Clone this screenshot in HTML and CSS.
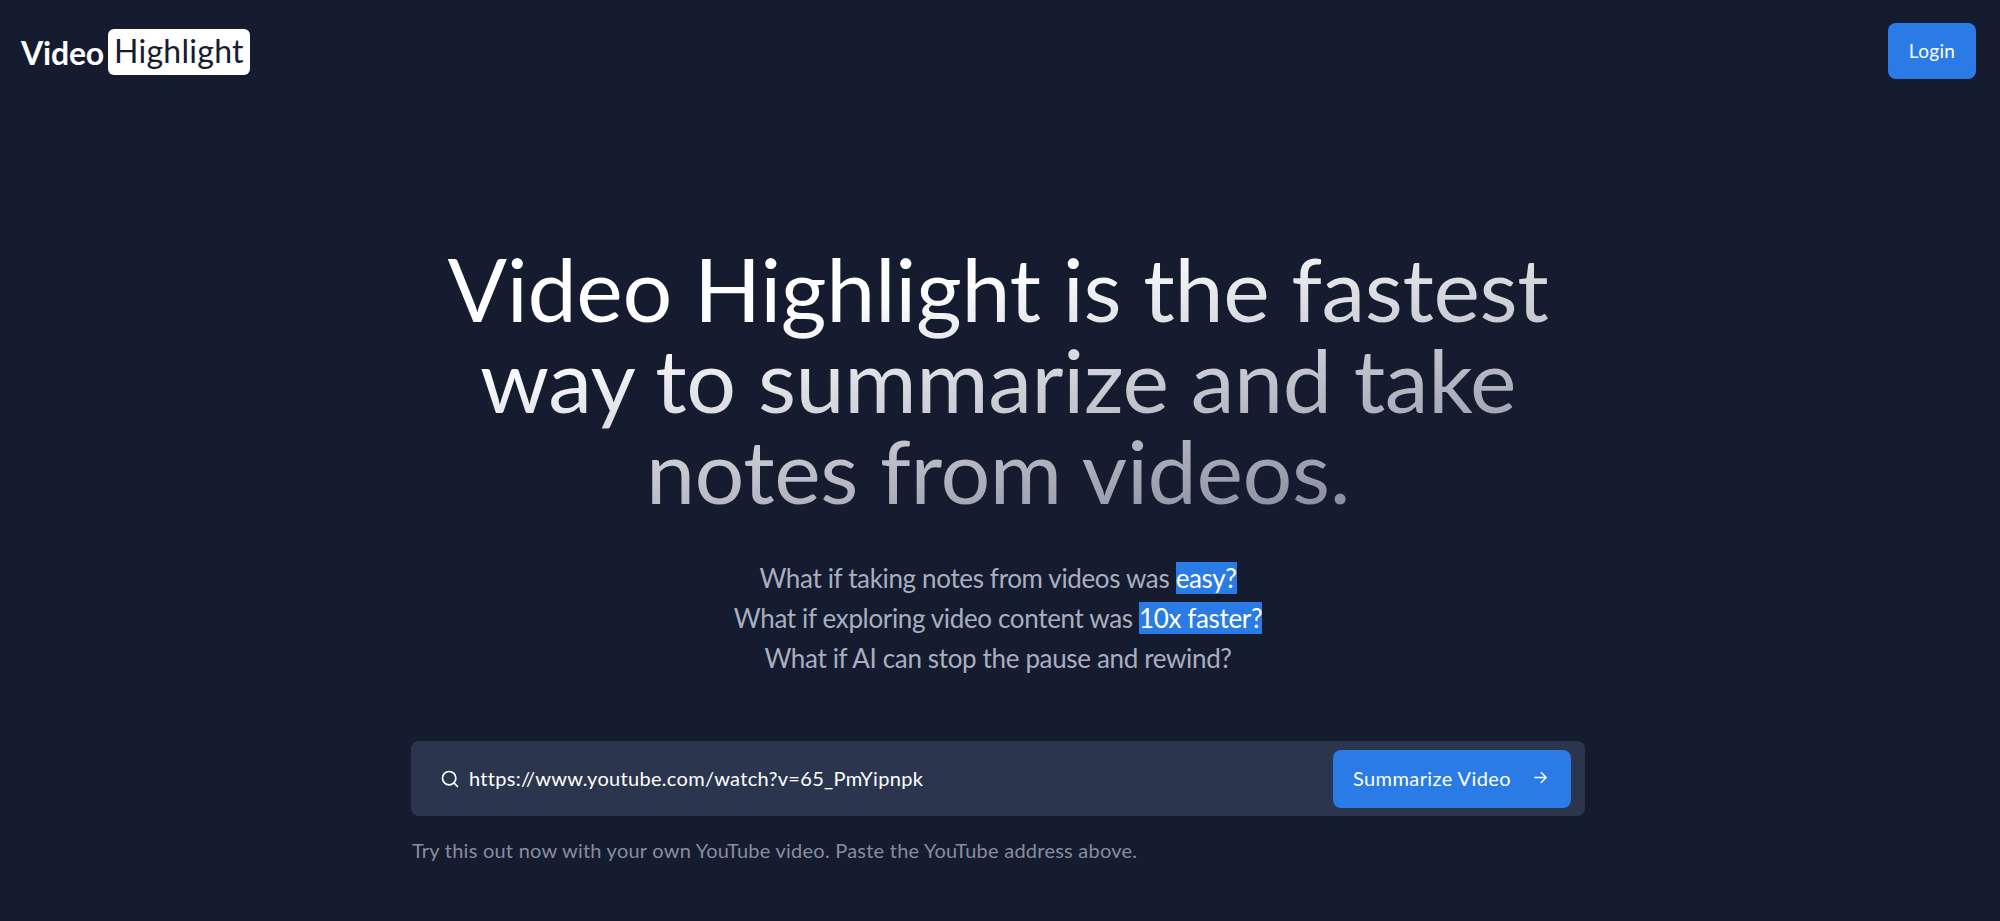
FILE: index.html
```html
<!DOCTYPE html>
<html lang="en">
<head>
<meta charset="utf-8">
<title>Video Highlight</title>
<link rel="stylesheet" href="styles.css">
</head>
<body>
<header class="topbar">
  <a class="logo" href="#"><span class="logo-word">Video</span><span class="logo-box">Highlight</span></a>
  <a class="login" href="#">Login</a>
</header>
<main class="hero">
  <h1 class="title">Video Highlight is the fastest way to summarize and take notes from videos.</h1>
  <div class="tagline">
    <p>What if taking notes from videos was <mark>easy?</mark></p>
    <p>What if exploring video content was <mark>10x faster?</mark></p>
    <p>What if AI can stop the pause and rewind?</p>
  </div>
  <form class="search">
    <svg class="search-icon" viewBox="0 0 24 24" fill="none" stroke="currentColor" stroke-width="2" stroke-linecap="round" stroke-linejoin="round"><circle cx="11" cy="11" r="8"/><path d="M21 21l-4.3-4.3"/></svg>
    <span class="url">https://www.youtube.com/watch?v=65_PmYipnpk</span>
    <button class="submit" type="button"><span class="submit-label">Summarize Video</span>
      <svg class="arrow" viewBox="0 0 24 24" fill="none" stroke="currentColor" stroke-width="2" stroke-linecap="round" stroke-linejoin="round"><path d="M4 12h16M13 5l7 7-7 7"/></svg>
    </button>
  </form>
  <p class="hint">Try this out now with your own YouTube video. Paste the YouTube address above.</p>
</main>
</body>
</html>
```
FILE: styles.css
```css
* { box-sizing: border-box; }
html, body { height: 100%; }
body {
  margin: 0;
  background: #161c2f;
  color: #fff;
  font-family: "Lato", "Liberation Sans", sans-serif;
  overflow: hidden;
}
a { color: inherit; text-decoration: none; }
.topbar {
  display: flex;
  justify-content: space-between;
  align-items: center;
  padding: 23px 24px 0 21px;
}
.logo { display: flex; align-items: center; gap: 4px; font-size: 32px; margin-top: 2px; }
.logo-word { font-weight: 700; letter-spacing: -0.2px; }
.logo-box {
  background: #fff;
  color: #161c2f;
  border-radius: 6px;
  padding: 0 6px;
  height: 46px;
  line-height: 44px;
  letter-spacing: 0.28px;
}
.login {
  display: flex;
  align-items: center;
  justify-content: center;
  width: 88px;
  height: 56px;
  padding-bottom: 2px;
  background: #2b7be6;
  border-radius: 8px;
  font-size: 19px;
  letter-spacing: 0.3px;
}
.hero {
  width: 1174px;
  margin: 164px 0 0 411px;
}
.title {
  margin: 0 auto;
  width: 1120px;
  text-align: center;
  font-size: 88px;
  line-height: 91px;
  font-weight: 400;
  letter-spacing: -0.4px;
  background: linear-gradient(170deg, #fff 27%, #767c90 100%);
  -webkit-background-clip: text;
  background-clip: text;
  color: transparent;
}
.tagline {
  margin-top: 42px;
  text-align: center;
  color: #a8afc0;
  font-size: 26px;
  line-height: 40px;
  letter-spacing: -0.35px;
}
.tagline p { margin: 0; }
mark { background: #2b7be6; color: #fff; }
.search {
  display: flex;
  align-items: center;
  height: 75px;
  margin-top: 63px;
  padding: 0 14px 0 29px;
  background: #2b364e;
  border-radius: 8px;
}
.search-icon { width: 20px; height: 20px; flex: none; }
.url { flex: 1; margin: 0 0 2px 9px; font-size: 20px; letter-spacing: 0.3px; }
.submit {
  display: flex;
  align-items: center;
  justify-content: space-between;
  width: 238px;
  height: 58px;
  padding: 0 22px 0 20px;
  border: 0;
  border-radius: 8px;
  background: #2b7be6;
  color: #fff;
  font: 20px "Lato", "Liberation Sans", sans-serif;
  letter-spacing: 0.4px;
}
.submit-label { margin-bottom: 2px; }
.arrow { width: 17px; height: 17px; margin-bottom: 2px; }
.hint { margin: 22px 0 0 1px; color: #878d9f; font-size: 20px; letter-spacing: 0.24px; }
```
